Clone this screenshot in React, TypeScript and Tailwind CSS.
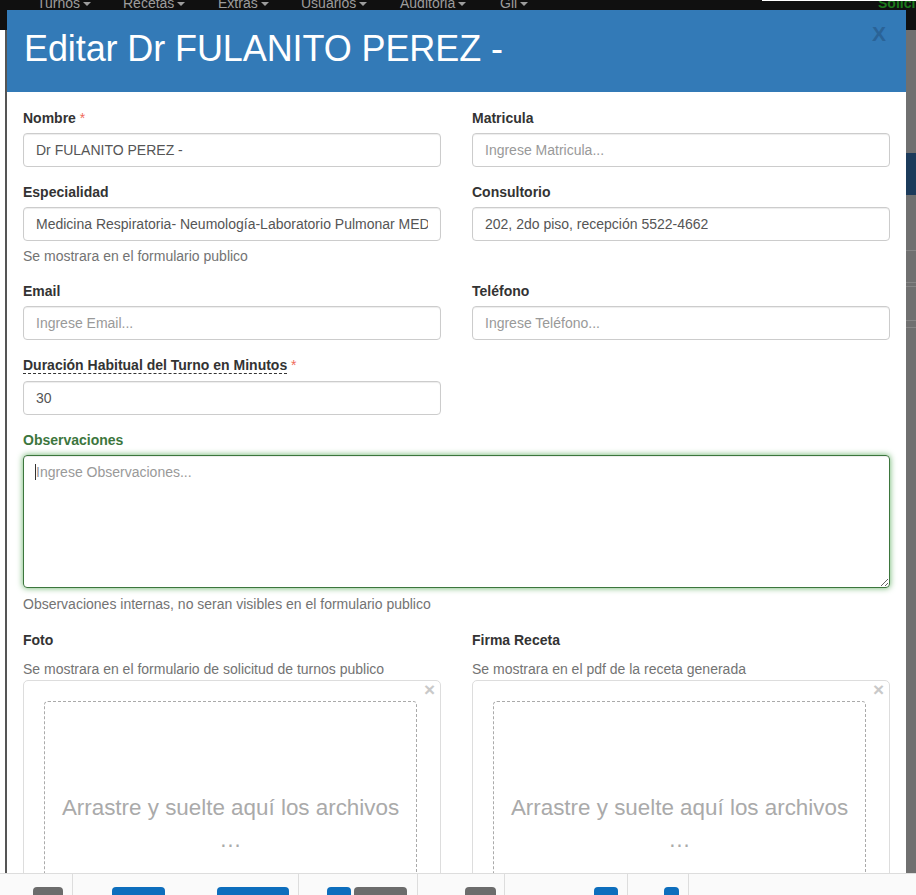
import type { ReactNode } from 'react'

const navItems = [
  { label: 'Turnos', w: 'w-[86px]' },
  { label: 'Recetas', w: 'w-[95px]' },
  { label: 'Extras', w: 'w-[83px]' },
  { label: 'Usuarios', w: 'w-[99px]' },
  { label: 'Auditoria', w: 'w-[100px]' },
  { label: 'Gil', w: 'w-[60px]' },
]

function Caret() {
  return (
    <span className="ml-[3px] inline-block h-0 w-0 align-middle border-x-[4px] border-t-[4px] border-x-transparent border-t-[#9d9d9d]" />
  )
}

function Label({ children, required, green }: { children: ReactNode; required?: boolean; green?: boolean }) {
  return (
    <label
      className={
        'mb-[5px] block text-[14px] font-bold leading-[20px] ' + (green ? 'text-[#3c763d]' : 'text-[#333]')
      }
    >
      {children}
      {required && <span className="font-normal text-[#ef6b5b]"> *</span>}
    </label>
  )
}

function Input({ value, placeholder }: { value?: string; placeholder?: string }) {
  return (
    <input
      readOnly
      defaultValue={value}
      placeholder={placeholder}
      className="block h-[34px] w-full rounded-[4px] border border-[#ccc] bg-white px-[12px] text-[14px] text-[#555] shadow-[inset_0_1px_1px_rgba(0,0,0,0.075)] outline-none placeholder:text-[#999]"
    />
  )
}

function Help({ children, mt = 'mt-[5px]' }: { children: ReactNode; mt?: string }) {
  return <p className={`${mt} text-[14px] leading-[20px] text-[#737373]`}>{children}</p>
}

function DropZone() {
  return (
    <div className="relative mt-[1px] h-[240px] rounded-[5px] border border-[#ddd] p-[8px]">
      <span className="absolute right-[5px] top-[4px] text-[19px] font-bold leading-[10px] text-[#c9c9c9]">×</span>
      <div className="ml-[12px] mr-[15px] mt-[12px] rounded-[4px] border border-dashed border-[#aaa] p-[5px]">
        <div className="px-[10px] pb-[85px] pt-[85px] text-center text-[22.4px] leading-[32px] text-[#aaa]">
          Arrastre y suelte aquí los archivos …
        </div>
      </div>
    </div>
  )
}

function Bar({ ml, w, blue }: { ml: string; w: string; blue?: boolean }) {
  return <div className={`${ml} ${w} mt-[13px] h-[12px] rounded-t-[4px] ${blue ? 'bg-[#0d6ebd]' : 'bg-[#6c6c6c]'}`} />
}

function Divider({ ml }: { ml: string }) {
  return <div className={`${ml} w-px self-stretch bg-[#ddd]`} />
}

export default function App() {
  return (
    <div className="relative h-[895px] w-[916px] overflow-hidden bg-white font-['Liberation_Sans',Arial,sans-serif]">
      {/* page behind the modal */}
      <div className="flex h-full flex-col">
        <div className="relative flex h-[30px] shrink-0 bg-[#101010] pl-[37px]">
          <div className="absolute left-[762px] right-0 top-0 h-px bg-white" />
          {navItems.map((n) => (
            <span key={n.label} className={`${n.w} -mt-[7px] text-[14px] leading-[20px] text-[#9d9d9d]`}>
              {n.label}
              <Caret />
            </span>
          ))}
          <span className="ml-auto -mt-[7px] w-[38px] overflow-hidden whitespace-nowrap text-[14px] font-bold leading-[20px] text-[#1b7a1b]">
            Solicitar
          </span>
        </div>
        <div className="flex flex-1">
          <div className="w-[5px] bg-white" />
          <div className="w-[2px] bg-[#555]" />
          <div className="flex-1" />
          <div className="flex w-[10px] flex-col bg-[#707070]">
            <div className="h-[123px]" />
            <div className="h-[42px] bg-[#1c3b5b]" />
            <div className="h-[55px]" />
            <div className="h-px bg-[#868686]" />
            <div className="h-[31px]" />
            <div className="h-px bg-[#868686]" />
            <div className="h-[3px]" />
            <div className="h-px bg-[#868686]" />
            <div className="h-[33px]" />
            <div className="h-px bg-[#868686]" />
            <div className="h-[6px]" />
            <div className="h-px bg-[#868686]" />
          </div>
        </div>
      </div>

      {/* modal */}
      <div className="absolute left-[7px] top-[10px] h-[863px] w-[899px] overflow-hidden bg-white">
        <div className="relative h-[82px] bg-[#337ab7] pl-[17px] pt-[19px]">
          <h4 className="text-[36px] leading-[40px] tracking-[-0.1px] text-white">Editar Dr FULANITO PEREZ -</h4>
          <span className="absolute right-[20px] top-[13px] text-[21px] font-bold leading-[21px] text-[#2a6397]">X</span>
        </div>

        <div className="px-[16px] pt-[16px]">
          <div className="grid grid-cols-2 gap-x-[31px]">
            <div className="mb-[15px]">
              <Label required>Nombre</Label>
              <Input value="Dr FULANITO PEREZ -" />
            </div>
            <div className="mb-[15px]">
              <Label>Matricula</Label>
              <Input placeholder="Ingrese Matricula..." />
            </div>

            <div className="mb-[15px]">
              <Label>Especialidad</Label>
              <Input value="Medicina Respiratoria- Neumología-Laboratorio Pulmonar MED" />
              <Help>Se mostrara en el formulario publico</Help>
            </div>
            <div className="mb-[15px]">
              <Label>Consultorio</Label>
              <Input value="202, 2do piso, recepción 5522-4662" />
            </div>

            <div className="mb-[15px]">
              <Label>Email</Label>
              <Input placeholder="Ingrese Email..." />
            </div>
            <div className="mb-[15px]">
              <Label>Teléfono</Label>
              <Input placeholder="Ingrese Teléfono..." />
            </div>

            <div className="mb-[15px]">
              <label className="mb-[6px] block text-[14px] font-bold leading-[20px] text-[#333]">
                <span className="border-b border-dashed border-[#333]">Duración Habitual del Turno en Minutos</span>
                <span className="font-normal text-[#ef6b5b]"> *</span>
              </label>
              <Input value="30" />
            </div>
            <div />
          </div>

          <div className="mb-[16px]">
            <Label green>Observaciones</Label>
            <div className="relative">
              <textarea
                readOnly
                placeholder="Ingrese Observaciones..."
                className="block h-[133px] w-full rounded-[4px] border border-[#3c763d] px-[12px] py-[6px] text-[14px] leading-[20px] text-[#555] shadow-[inset_0_1px_1px_rgba(0,0,0,0.075),0_0_6px_#67b168] outline-none placeholder:text-[#999]"
              />
              <span className="absolute left-[12px] top-[9px] h-[16px] w-px bg-[#333]" />
            </div>
            <Help mt="mt-[6px]">Observaciones internas, no seran visibles en el formulario publico</Help>
          </div>

          <div className="grid grid-cols-2 gap-x-[31px]">
            <div>
              <Label>Foto</Label>
              <Help mt="mt-[9px]">Se mostrara en el formulario de solicitud de turnos publico</Help>
              <DropZone />
            </div>
            <div>
              <Label>Firma Receta</Label>
              <Help mt="mt-[9px]">Se mostrara en el pdf de la receta generada</Help>
              <DropZone />
            </div>
          </div>
        </div>
      </div>

      {/* page footer bar over the modal */}
      <div className="absolute bottom-0 left-0 right-0 flex h-[22px] border-t border-[#ddd] bg-[#fafafa]">
        <Bar ml="ml-[33px]" w="w-[30px]" />
        <Divider ml="ml-[9px]" />
        <Bar ml="ml-[39px]" w="w-[53px]" blue />
        <Bar ml="ml-[52px]" w="w-[72px]" blue />
        <Divider ml="ml-[9px]" />
        <Bar ml="ml-[28px]" w="w-[24px]" blue />
        <Bar ml="ml-[3px]" w="w-[53px]" />
        <Divider ml="ml-[10px]" />
        <Bar ml="ml-[47px]" w="w-[31px]" />
        <Divider ml="ml-[8px]" />
        <Bar ml="ml-[89px]" w="w-[24px]" blue />
        <Divider ml="ml-[9px]" />
        <Bar ml="ml-[36px]" w="w-[15px]" blue />
        <Divider ml="ml-[9px]" />
      </div>
    </div>
  )
}
